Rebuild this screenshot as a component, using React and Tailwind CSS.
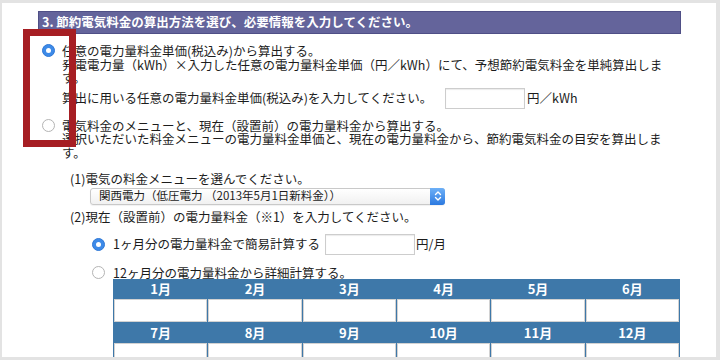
import React from "react";

function RadioOn() {
  return (
    <span className="w-[13px] h-[13px] shrink-0 rounded-full bg-[#3d8ae8] border border-[#2f78d6] flex items-center justify-center">
      <span className="w-[5px] h-[5px] rounded-full bg-white" />
    </span>
  );
}

function RadioOff() {
  return (
    <span className="w-[13px] h-[13px] shrink-0 rounded-full bg-white border border-[#b4b4b4]" />
  );
}

const months1 = ["1月", "2月", "3月", "4月", "5月", "6月"];
const months2 = ["7月", "8月", "9月", "10月", "11月", "12月"];

function MonthBlock({ months }) {
  return (
    <>
      <div className="grid grid-cols-6 gap-x-[1px] h-[19px]">
        {months.map((m) => (
          <div key={m} className="flex items-center justify-center text-white font-bold text-[13px] leading-none">
            {m}
          </div>
        ))}
      </div>
      <div className="grid grid-cols-6 gap-x-[1px] py-[1px]">
        {months.map((m) => (
          <div key={m} className="h-[23px] bg-white border border-[#d2d2d2]" />
        ))}
      </div>
    </>
  );
}

export default function App() {
  return (
    <div className="w-[720px] h-[360px] overflow-hidden bg-[#e3e3e3] pt-[3px] pl-[2px] pr-[4px] pb-[3px] font-['Noto_Sans_CJK_JP','Noto_Sans',sans-serif] text-[#1c1c1c]">
      <div className="relative h-full bg-white overflow-hidden">
        {/* header bar */}
        <div className="ml-[36px] mt-[8px] w-[643px] h-[23px] bg-[#64649b] border border-[#4f4f86] flex items-center pl-[3px] text-white font-bold text-[12.5px] leading-none whitespace-nowrap">
          3. 節約電気料金の算出方法を選び、必要情報を入力してください。
        </div>

        {/* option 1 */}
        <div className="mt-[10px] pl-[40px] flex gap-[7px] text-[12.5px] leading-[13.5px] whitespace-nowrap">
          <div className="h-[13.5px] flex items-center">
            <RadioOn />
          </div>
          <div>
            <div>任意の電力量料金単価(税込み)から算出する。</div>
            <div>発電電力量（kWh）×入力した任意の電力量料金単価（円／kWh）にて、予想節約電気料金を単純算出しま</div>
            <div>す。</div>
            <div className="mt-[3px] flex items-center h-[21px]">
              <span className="w-[383px]">算出に用いる任意の電力量料金単価(税込み)を入力してください。</span>
              <span className="w-[80px] h-[21px] border border-[#cdcdcd] bg-white shadow-[inset_0_1px_1px_rgba(0,0,0,0.08)]" />
              <span className="ml-[2px]">円／kWh</span>
            </div>
          </div>
        </div>

        {/* option 2 */}
        <div className="mt-[10px] pl-[40px] flex gap-[7px] text-[12.5px] leading-[13.5px] whitespace-nowrap">
          <div className="h-[13.5px] flex items-center">
            <RadioOff />
          </div>
          <div>
            <div>電気料金のメニューと、現在（設置前）の電力量料金から算出する。</div>
            <div>選択いただいた料金メニューの電力量料金単価と、現在の電力量料金から、節約電気料金の目安を算出しま</div>
            <div>す。</div>
          </div>
        </div>

        {/* sub content */}
        <div className="ml-[68px] text-[12.5px] whitespace-nowrap">
          <div className="mt-[12.5px] leading-[13.5px]">(1)電気の料金メニューを選んでください。</div>
          <div className="ml-[20px] mt-[2.5px] w-[355px] h-[17px] flex rounded-[3px] border border-[#c9c9c9] bg-gradient-to-b from-white to-[#f1f1f1] shadow-[0_1px_1px_rgba(0,0,0,0.06)]">
            <div className="flex-1 flex items-center pl-[8px] text-[11.5px] leading-none">
              関西電力（低圧電力 （2013年5月1日新料金））
            </div>
            <div className="w-[15px] -my-[1px] -mr-[1px] rounded-r-[3px] bg-gradient-to-b from-[#6db0f7] to-[#2b79e0] flex items-center justify-center">
              <svg width="8" height="12" viewBox="0 0 8 12" fill="none" stroke="white" strokeWidth="1.4" strokeLinecap="round" strokeLinejoin="round">
                <path d="M1.5 4.5 L4 2 L6.5 4.5" />
                <path d="M1.5 7.5 L4 10 L6.5 7.5" />
              </svg>
            </div>
          </div>
          <div className="mt-[5px] leading-[13.5px]">(2)現在（設置前）の電力量料金（※1）を入力してください。</div>

          <div className="mt-[10.5px] ml-[22px] flex items-center h-[21px]">
            <span className="mr-[8px] flex"><RadioOn /></span>
            <span className="w-[212px]">1ヶ月分の電力量料金で簡易計算する</span>
            <span className="w-[90px] h-[21px] border border-[#cdcdcd] bg-white shadow-[inset_0_1px_1px_rgba(0,0,0,0.08)]" />
            <span className="ml-[1px]">円/月</span>
          </div>

          <div className="mt-[12px] ml-[22px] flex items-center h-[12px] leading-[12px]">
            <span className="mr-[8px] flex"><RadioOff /></span>
            <span>12ヶ月分の電力量料金から詳細計算する。</span>
          </div>

          <div className="ml-[43px] w-[567px] bg-[#3e78a9] px-[1px]">
            <MonthBlock months={months1} />
            <MonthBlock months={months2} />
          </div>
        </div>

        {/* red highlight */}
        <div className="absolute left-[21px] top-[26px] w-[53px] h-[118px] border-[7px] border-[#a61e23]" />
      </div>
    </div>
  );
}
